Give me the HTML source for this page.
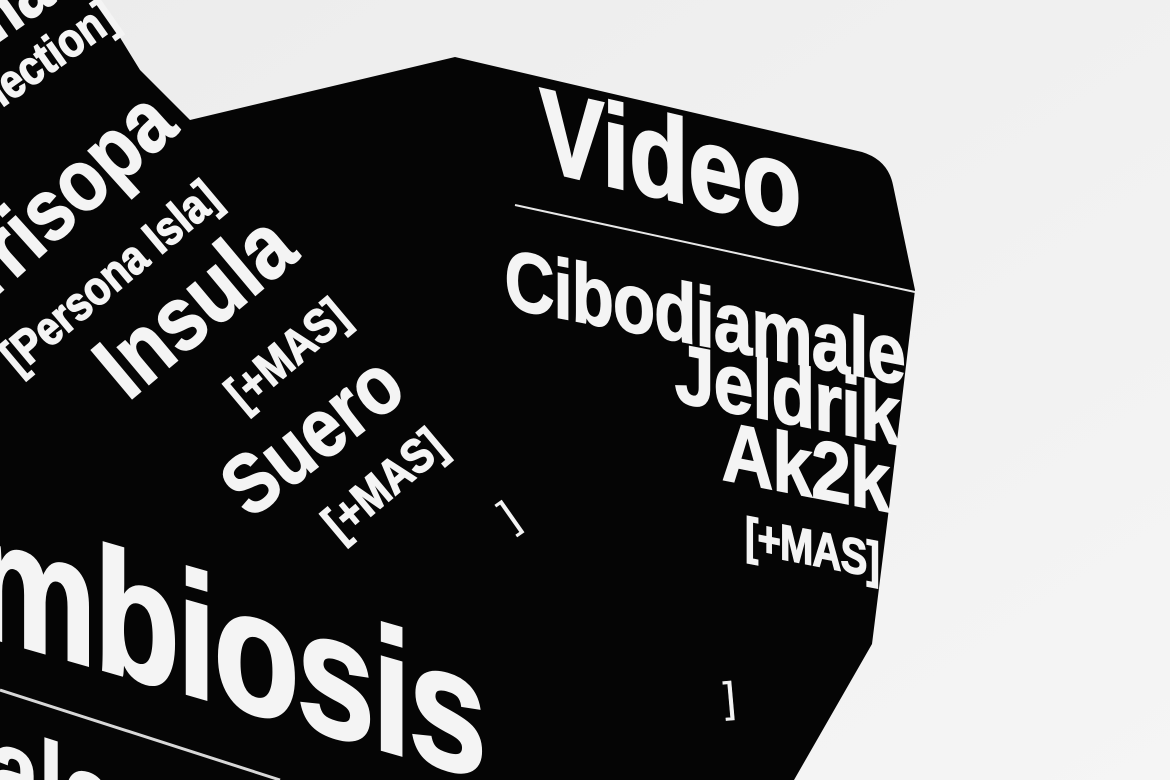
<!DOCTYPE html>
<html><head><meta charset="utf-8"><style>
html,body{margin:0;padding:0;width:1170px;height:780px;overflow:hidden;background:#efefef}
svg{display:block}
text{font-family:"Liberation Sans Narrow","Liberation Sans",sans-serif;font-weight:bold;fill:#f4f4f4;stroke:#f4f4f4;stroke-width:1.5}
</style></head><body>
<svg width="1170" height="780" viewBox="0 0 1170 780">
<defs><linearGradient id="bg" x1="0" y1="0" x2="1" y2="1"><stop offset="0" stop-color="#ececec"/><stop offset="1" stop-color="#f5f5f5"/></linearGradient></defs>
<rect width="1170" height="780" fill="url(#bg)"/>
<path d="M0,0 L97,0 L140,70 L190,120 L455,57 L862,152 Q888,160 893,185 L915,290 L890,500 L872,644 L794,780 L0,780 Z" fill="#050505"/>
<g transform="skewY(13)">
<text x="538" y="45" transform="scale(0.82,1)" style="font-size:118px;stroke-width:2.5" dx="120">Video</text>
</g>
<line x1="515" y1="205" x2="915" y2="292" stroke="#e8e8e8" stroke-width="2"/>
<g text-anchor="end">
<text transform="translate(905,385) skewY(11) scale(0.82,1)" style="font-size:84px;letter-spacing:-1px">Cibodiamale</text>
<text transform="translate(899,445) skewY(11) scale(0.85,1)" style="font-size:84px;letter-spacing:-1px">Jeldrik</text>
<text transform="translate(889,512) skewY(11) scale(0.85,1)" style="font-size:84px;letter-spacing:-1px">Ak2k</text>
<text transform="translate(879,578) skewY(11) scale(0.8,1)" style="font-size:50px;letter-spacing:-1px">[+MAS]</text>
</g>
<text transform="translate(128,402) rotate(-40) scale(0.85,1)" style="font-size:92px">Insula</text>
<text transform="translate(243,412) rotate(-40) scale(0.85,1)" style="font-size:48px">[+MAS]</text>
<text transform="translate(250,520) rotate(-38) scale(0.85,1)" style="font-size:84px">Suero</text>
<text transform="translate(340,542) rotate(-40) scale(0.85,1)" style="font-size:48px">[+MAS]</text>
<text transform="translate(-8,300) rotate(-42) scale(0.85,1)" style="font-size:88px">rrisopa</text>
<text transform="translate(18,375) rotate(-40) scale(0.85,1)" style="font-size:48px">[Persona Isla]</text>
<text transform="translate(-30,130) rotate(-35) scale(0.85,1)" style="font-size:48px">nnection]</text>
<text transform="translate(-20,55) rotate(-35) scale(0.85,1)" style="font-size:76px">ma</text>
<text transform="translate(-28,632) skewY(16) scale(0.8,1)" style="font-size:175px;letter-spacing:-3px;stroke-width:3">mbiosis</text>
<line x1="0" y1="690" x2="280" y2="780" stroke="#d8d8d8" stroke-width="3"/>
<text transform="translate(-10,800) skewY(18) scale(0.8,1)" style="font-size:110px">alero</text>
<text transform="translate(512,530) rotate(-35)" style="font-size:42px;font-weight:normal;stroke-width:0.5">]</text>
<text transform="translate(725,712) rotate(-5)" style="font-size:42px;font-weight:normal;stroke-width:0.5">]</text>
</svg>
</body></html>
